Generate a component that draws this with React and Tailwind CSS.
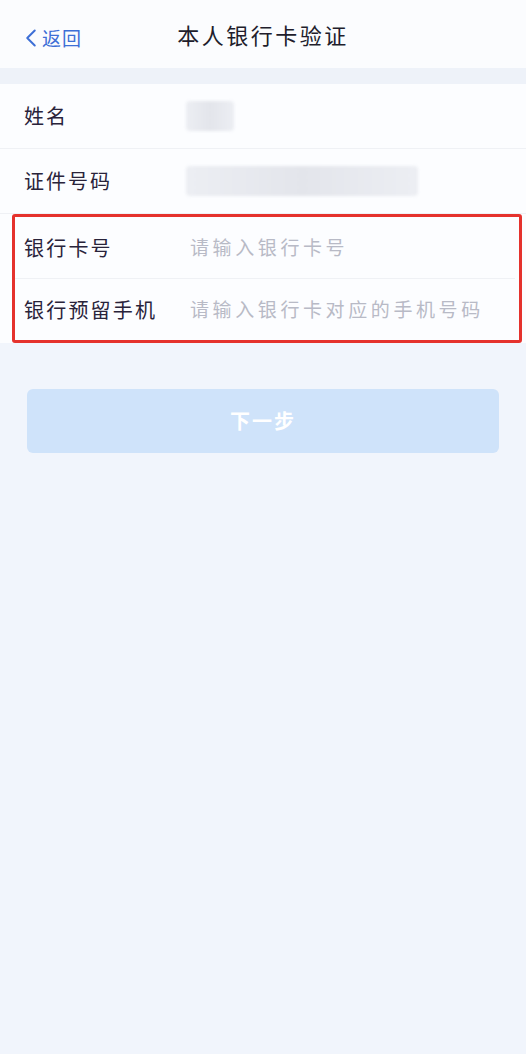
import { ChevronLeft } from "lucide-react";

const rows = [
  { label: "姓名", blur: "w-[48px]" },
  { label: "证件号码", blur: "w-[232px]" },
];

function Blurred({ width }) {
  return (
    <div className={`${width} h-[30px] rounded-sm bg-gradient-to-r from-[#eceef3] via-[#e3e5eb] to-[#eceef3] blur-[1.5px]`} />
  );
}

export default function App() {
  return (
    <div
      className="min-h-[1054px] w-[526px] bg-[#f1f5fc] text-[#29233a]"
      style={{ fontFamily: '"Noto Sans CJK SC", "Noto Sans", sans-serif' }}
    >
      {/* 顶部导航 */}
      <div className="relative h-[68px] bg-[#fbfcfe] flex items-center justify-center">
        <button className="absolute left-[16px] top-[23px] flex items-center text-[#3d6fd6]">
          <ChevronLeft size={30} strokeWidth={1.6} />
          <span className="text-[19px] -ml-[4px] tracking-[1px]">返回</span>
        </button>
        <h1 className="text-[22px] tracking-[2.5px] text-[#211d2c]">本人银行卡验证</h1>
      </div>

      <div className="h-[16px] bg-[#eef2f9]" />

      {/* 表单 */}
      <div className="bg-[#fcfdff]">
        {rows.map((r) => (
          <div key={r.label} className="h-[65px] flex items-center pl-[24px] border-b border-[#eff1f5]">
            <span className="w-[162px] text-[20px] tracking-[2px]">{r.label}</span>
            <Blurred width={r.blur} />
          </div>
        ))}
        <div className="ml-[12px] mr-[4px] border-[3px] border-[#e5322d] rounded-[3px]">
          <div className="h-[62px] flex items-center pl-[9px] border-b border-[#eff1f5] mr-[4px]">
            <span className="w-[166px] text-[20px] tracking-[2.2px]">银行卡号</span>
            <span className="text-[19px] tracking-[3.6px] text-[#b8bac6]">请输入银行卡号</span>
          </div>
          <div className="h-[61px] flex items-center pl-[9px]">
            <span className="w-[166px] text-[20px] tracking-[2.2px] whitespace-nowrap">银行预留手机</span>
            <span className="text-[19px] tracking-[3.6px] text-[#b8bac6] whitespace-nowrap">请输入银行卡对应的手机号码</span>
          </div>
        </div>
      </div>

      {/* 下一步 */}
      <div className="px-[27px] pt-[46px]">
        <button className="w-full h-[64px] rounded-[6px] bg-[#cfe3fa] text-white text-[20px] font-bold tracking-[2px]">
          下一步
        </button>
      </div>
    </div>
  );
}
